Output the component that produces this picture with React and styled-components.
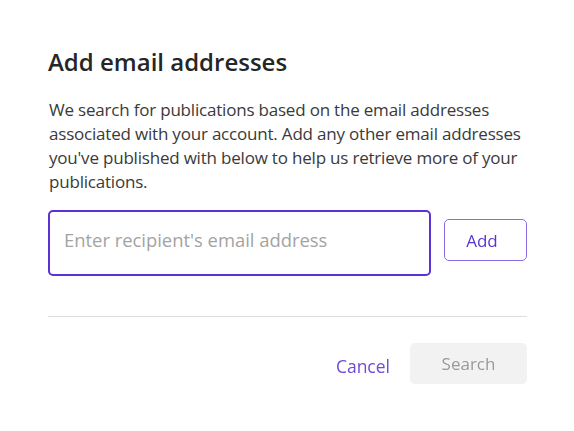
import React, { useState } from 'react';
import styled, { createGlobalStyle } from 'styled-components';

const GlobalStyle = createGlobalStyle`
	html, body {
		margin: 0;
		padding: 0;
		background: #ffffff;
	}
	body {
		font-family: 'Open Sans', 'Noto Sans', sans-serif;
		color: #2e2e2e;
	}
`;

const Dialog = styled.div`
	width: 479px;
	padding: 44px 47px 0 48px;
	display: flex;
	flex-direction: column;
`;

const Title = styled.h2`
	margin: 0;
	font-size: 24px;
	font-weight: 600;
	line-height: 36px;
	color: #262626;
`;

const Description = styled.p`
	margin: 18px 0 0 1px;
	font-size: 17px;
	line-height: 24px;
	color: #3a3a3a;
	letter-spacing: -0.2px;
`;

const InputRow = styled.div`
	display: flex;
	align-items: flex-start;
	gap: 13px;
	margin-top: 16px;
`;

const EmailInput = styled.input`
	flex: 1;
	box-sizing: border-box;
	height: 66px;
	border: 2px solid #5b32d6;
	border-radius: 5px;
	padding: 0 14px 7px;
	font-family: inherit;
	font-size: 18.4px;
	color: #2e2e2e;
	outline: none;
	caret-color: #5b32d6;
	&::placeholder {
		color: #a3a3a3;
	}
`;

const Button = styled.button`
	box-sizing: border-box;
	height: ${({ tall }) => (tall ? '41px' : '42px')};
	width: ${({ w }) => w}px;
	border-radius: 5px;
	font-family: inherit;
	font-size: 17px;
	cursor: pointer;
	border: ${({ variant }) => (variant === 'outline' ? '1px solid #8a6de6' : 'none')};
	background: ${({ variant }) => (variant === 'muted' ? '#f2f2f2' : 'transparent')};
	color: ${({ variant }) =>
		variant === 'muted' ? '#9a9a9a' : variant === 'text' ? '#7048da' : '#5b32d6'};
	padding: 0;
`;

const AddButton = styled(Button)`
	margin-top: 9px;
	padding-right: 7px;
`;

const Divider = styled.hr`
	margin: 40px 0 0;
	border: none;
	border-top: 1px solid #dedede;
`;

const Footer = styled.div`
	display: flex;
	justify-content: flex-end;
	align-items: center;
	gap: 12px;
	margin-top: 22px;
`;

const TextButton = styled(Button)`
	width: auto;
	padding: 0 8px;
	margin-top: 6px;
	font-size: 17.5px;
`;

const App = () => {
	const [email, setEmail] = useState('');

	return (
		<>
			<GlobalStyle />
			<Dialog>
				<Title>Add email addresses</Title>
				<Description>
					We search for publications based on the email addresses associated with your
					account. Add any other email addresses you've published with below to help us
					retrieve more of your publications.
				</Description>
				<InputRow>
					<EmailInput
						autoFocus
						value={email}
						onChange={(e) => setEmail(e.target.value)}
						placeholder="Enter recipient's email address"
					/>
					<AddButton variant="outline" w={83}>
						Add
					</AddButton>
				</InputRow>
				<Divider />
				<Footer>
					<TextButton variant="text">Cancel</TextButton>
					<Button variant="muted" w={117} tall>
						Search
					</Button>
				</Footer>
			</Dialog>
		</>
	);
};

export default App;
